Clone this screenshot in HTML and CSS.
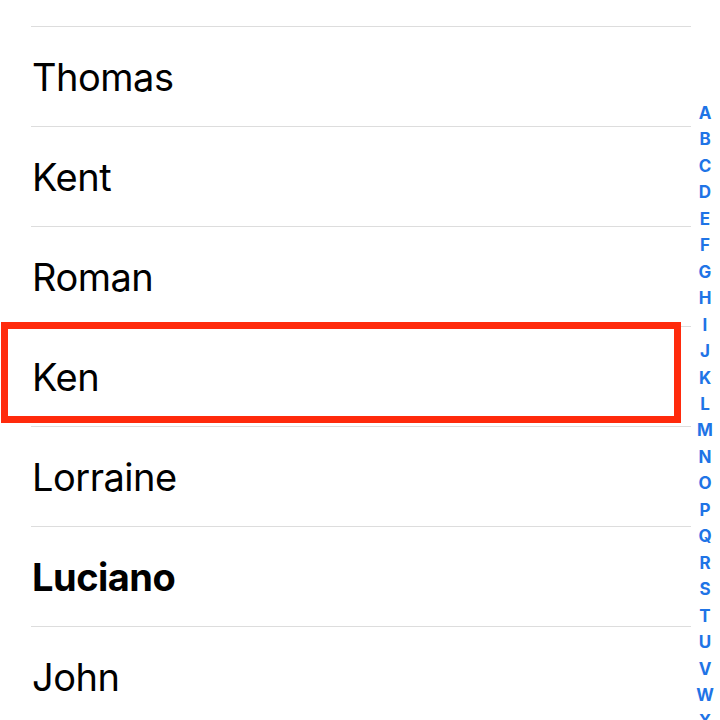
FILE: index.html
```html
<!DOCTYPE html>
<html lang="en">

<head>
    <meta charset="UTF-8">
    <meta name="viewport" content="width=device-width, initial-scale=1.0">
    <title>Contacts</title>
    <link rel="stylesheet" href="styles.css">
</head>

<body>
    <div class="screen">
        <!-- Contact rows -->
        <ul class="contacts">
            <li class="contact">Thomas</li>
            <li class="contact">Kent</li>
            <li class="contact">Roman</li>
            <li class="contact selected">Ken</li>
            <li class="contact">Lorraine</li>
            <li class="contact me">Luciano</li>
            <li class="contact">John</li>
        </ul>

        <!-- Section index on the right edge -->
        <ol class="index">
            <li>A</li><li>B</li><li>C</li><li>D</li><li>E</li><li>F</li>
            <li>G</li><li>H</li><li>I</li><li>J</li><li>K</li><li>L</li>
            <li>M</li><li>N</li><li>O</li><li>P</li><li>Q</li><li>R</li>
            <li>S</li><li>T</li><li>U</li><li>V</li><li>W</li><li>X</li>
        </ol>
    </div>
</body>

</html>
```

FILE: styles.css
```css
body {
    margin: 0;
    padding: 0;
    background-color: #ffffff;
    font-family: 'Inter', 'Liberation Sans', sans-serif;
    color: #000000;
}

.screen {
    position: relative;
    width: 720px;
    height: 720px;
    overflow: hidden;
}

.contacts {
    list-style: none;
    margin: 26px 0 0 31px;
    padding: 0;
    width: 660px;
}

.contact {
    display: flex;
    align-items: center;
    height: 99px;
    border-top: 1px solid #dddddd;
    padding-left: 1px;
    font-size: 38px;
    letter-spacing: -0.5px;
}

.contact.me {
    font-weight: 700;
}

/* red highlight frame around the picked row */
.contact.selected {
    position: relative;
}

.contact.selected::after {
    content: "";
    position: absolute;
    top: -5px;
    left: -30px;
    right: 10px;
    bottom: 3px;
    border: 7px solid #ff2a0c;
}

.index {
    position: absolute;
    top: 100px;
    right: 0;
    width: 30px;
    margin: 0;
    padding: 0;
    list-style: none;
    text-align: center;
    font-size: 17px;
    font-weight: 700;
    line-height: 26.45px;
    color: #1f74e6;
}
```
